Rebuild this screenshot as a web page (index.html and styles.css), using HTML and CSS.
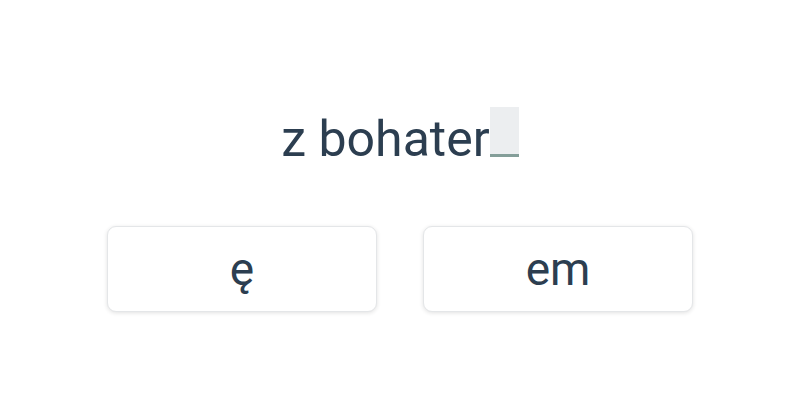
FILE: index.html
```html
<!DOCTYPE html>
<html>
<head>
<meta charset="utf-8">
<link rel="stylesheet" href="styles.css">
</head>
<body>
<div class="app">
  <div class="sentence">z bohater<span class="blank"></span></div>
  <div class="choices">
    <button class="choice">ę</button>
    <button class="choice">em</button>
  </div>
</div>
</body>
</html>
```
FILE: styles.css
```css
html, body {
  margin: 0;
  padding: 0;
  background: #ffffff;
}
.app {
  width: 800px;
  height: 400px;
  display: flex;
  flex-direction: column;
  align-items: center;
  font-family: Roboto, "Noto Sans", sans-serif;
  color: #2c3e50;
}
.sentence {
  margin-top: 107px;
  font-size: 50px;
  line-height: 50px;
  height: 57px;
  white-space: nowrap;
}
.blank {
  display: inline-block;
  vertical-align: -1px;
  width: 29px;
  height: 47px;
  background: #eceef0;
  border-bottom: 3px solid #849e99;
}
.choices {
  margin-top: 62px;
  display: flex;
  gap: 46px;
}
.choice {
  width: 270px;
  height: 86px;
  background: #ffffff;
  border: 1px solid #e4e6e8;
  border-radius: 9px;
  box-shadow: 0 1px 4px rgba(0,0,0,0.12);
  font-family: Roboto, "Noto Sans", sans-serif;
  font-size: 46px;
  color: #2c3e50;
  padding: 0;
}
```
